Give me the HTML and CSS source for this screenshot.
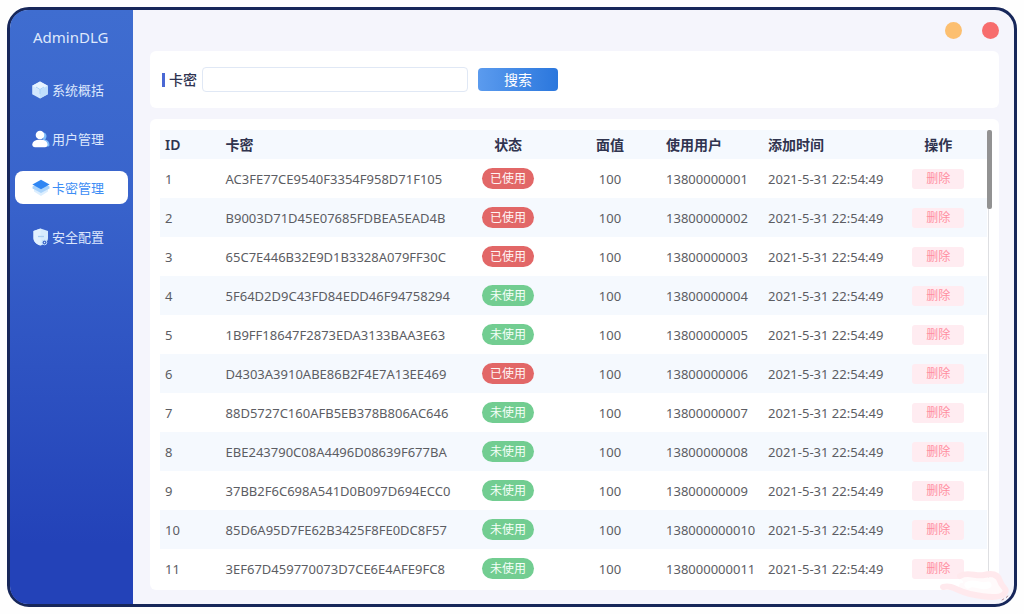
FILE: index.html
```html
<!DOCTYPE html>
<html lang="zh-CN">
<head>
<meta charset="utf-8">
<title>AdminDLG</title>
<link rel="stylesheet" href="styles.css">
</head>
<body>
<div class="window">
  <aside class="sidebar">
    <h1 class="brand">AdminDLG</h1>
    <nav class="nav">
      <a class="nav-link" href="#">
        <svg class="icon" viewBox="0 0 18 18"><path d="M8 .5 15.800 4.700v8.600L8 17.500 .2 13.300V4.700Z" fill="#d3e8fe"/><path d="M8 .5 15.800 4.700 8 9 .2 4.700Z" fill="#e6f3ff"/><path d="M8 9 15.800 4.700v8.600L8 17.500Z" fill="#bfdffc"/><path d="M4 6 8 8.500l4-2.500M8 8.500v4.500" stroke="#a6d0fa" fill="none"/></svg>
        系统概括</a>
      <a class="nav-link" href="#">
        <svg class="icon" viewBox="0 0 18 18"><path d="M11 2.500c4 0 4.500 5 2 7 3 .8 4.500 3 4.500 5.500 0 1-1 1.500-2 1.500h-5Z" fill="#7fbcfa"/><circle cx="8" cy="5" r="4.300" fill="#fff"/><path d="M.3 14.500C.5 11.500 3 9.700 8 9.700s7.300 1.800 7.500 4.800c0 1.800-1 2.700-2.500 2.700H3C1.400 17.200.3 16.300.3 14.500Z" fill="#fff"/></svg>
        用户管理</a>
      <a class="nav-link active" href="#" aria-current="page">
        <svg class="icon" viewBox="0 0 18 18"><path d="M2 10.500 9 7l7 3.500v2L9 17l-7-4.500Z" fill="#dceefe"/><path d="M.5 7.500 9 4l8.500 3.500v2L9 14 .5 9.500Z" fill="#a9d3fb"/><path d="M9 .8 17.600 5.500 9 10.300.4 5.500Z" fill="#2f86f3"/></svg>
        卡密管理</a>
      <a class="nav-link" href="#">
        <svg class="icon" viewBox="0 0 18 18"><path d="M8.500.5 16 3v7c0 3.500-3 6-7.500 7.500C4 16 1.500 13.500 1.500 10V3Z" fill="#d5eafd"/><path d="M8.500.5V17.500C4 16 1.500 13.500 1.500 10V3Z" fill="#e2f1ff"/><path d="M6 8.500h6" stroke="#a9cdf2" stroke-width="1.300"/><circle cx="12.500" cy="14.500" r="2.300" fill="#3f67c9" stroke="#b9d8f8"/><circle cx="12.500" cy="14.500" r=".7" fill="#d5eafd"/></svg>
        安全配置</a>
    </nav>
  </aside>
  <main class="main">
    <header class="titlebar">
      <button class="dot minimize" type="button" aria-label="最小化"></button>
      <button class="dot close" type="button" aria-label="关闭"></button>
    </header>
    <form class="card search">
      <label class="search-label" for="key">卡密</label>
      <input class="search-input" id="key" type="text">
      <button class="search-button" type="button">搜索</button>
    </form>
    <section class="card list">
      <table class="table">
        <colgroup><col class="c-id"><col class="c-key"><col class="c-status"><col class="c-value"><col class="c-user"><col class="c-time"><col class="c-action"></colgroup>
        <thead><tr><th>ID</th><th>卡密</th><th class="mid">状态</th><th class="mid">面值</th><th>使用用户</th><th>添加时间</th><th class="mid">操作</th></tr></thead>
        <tbody>
          <tr><td>1</td><td>AC3FE77CE9540F3354F958D71F105</td><td class="mid"><span class="badge used">已使用</span></td><td class="mid">100</td><td>13800000001</td><td>2021-5-31 22:54:49</td><td class="mid"><button class="delete" type="button">删除</button></td></tr>
          <tr><td>2</td><td>B9003D71D45E07685FDBEA5EAD4B</td><td class="mid"><span class="badge used">已使用</span></td><td class="mid">100</td><td>13800000002</td><td>2021-5-31 22:54:49</td><td class="mid"><button class="delete" type="button">删除</button></td></tr>
          <tr><td>3</td><td>65C7E446B32E9D1B3328A079FF30C</td><td class="mid"><span class="badge used">已使用</span></td><td class="mid">100</td><td>13800000003</td><td>2021-5-31 22:54:49</td><td class="mid"><button class="delete" type="button">删除</button></td></tr>
          <tr><td>4</td><td>5F64D2D9C43FD84EDD46F94758294</td><td class="mid"><span class="badge">未使用</span></td><td class="mid">100</td><td>13800000004</td><td>2021-5-31 22:54:49</td><td class="mid"><button class="delete" type="button">删除</button></td></tr>
          <tr><td>5</td><td>1B9FF18647F2873EDA3133BAA3E63</td><td class="mid"><span class="badge">未使用</span></td><td class="mid">100</td><td>13800000005</td><td>2021-5-31 22:54:49</td><td class="mid"><button class="delete" type="button">删除</button></td></tr>
          <tr><td>6</td><td>D4303A3910ABE86B2F4E7A13EE469</td><td class="mid"><span class="badge used">已使用</span></td><td class="mid">100</td><td>13800000006</td><td>2021-5-31 22:54:49</td><td class="mid"><button class="delete" type="button">删除</button></td></tr>
          <tr><td>7</td><td>88D5727C160AFB5EB378B806AC646</td><td class="mid"><span class="badge">未使用</span></td><td class="mid">100</td><td>13800000007</td><td>2021-5-31 22:54:49</td><td class="mid"><button class="delete" type="button">删除</button></td></tr>
          <tr><td>8</td><td>EBE243790C08A4496D08639F677BA</td><td class="mid"><span class="badge">未使用</span></td><td class="mid">100</td><td>13800000008</td><td>2021-5-31 22:54:49</td><td class="mid"><button class="delete" type="button">删除</button></td></tr>
          <tr><td>9</td><td>37BB2F6C698A541D0B097D694ECC0</td><td class="mid"><span class="badge">未使用</span></td><td class="mid">100</td><td>13800000009</td><td>2021-5-31 22:54:49</td><td class="mid"><button class="delete" type="button">删除</button></td></tr>
          <tr><td>10</td><td>85D6A95D7FE62B3425F8FE0DC8F57</td><td class="mid"><span class="badge">未使用</span></td><td class="mid">100</td><td>138000000010</td><td>2021-5-31 22:54:49</td><td class="mid"><button class="delete" type="button">删除</button></td></tr>
          <tr><td>11</td><td>3EF67D459770073D7CE6E4AFE9FC8</td><td class="mid"><span class="badge">未使用</span></td><td class="mid">100</td><td>138000000011</td><td>2021-5-31 22:54:49</td><td class="mid"><button class="delete" type="button">删除</button></td></tr>
        </tbody>
      </table>
      <div class="track"><div class="thumb"></div></div>
    </section>
  </main>
  <svg class="smudge" viewBox="0 0 76 36" fill="none" stroke-linecap="round" stroke-linejoin="round">
    <path d="M26 9 48 11 62 13 64 22 36 24 24 17" fill="#fffafb" stroke="#fffafb" stroke-width="6"/>
    <path d="M22 7C30 2 38 8 46 6S60 5 62 12 71 20 66 25 46 28 32 25 16 16 5 18" stroke="#ffe9ed" stroke-width="6"/>
    <path d="M30 16C36 12 42 19 50 16" stroke="#fff" stroke-width="7"/>
    <path d="M64 31 69 28 71 25" stroke="#b98f96" stroke-width="1" stroke-dasharray="2 3"/>
  </svg>
</div>
</body>
</html>
```
FILE: styles.css
```css
* { box-sizing: border-box; }

body {
  margin: 0;
  padding: 7px 7px 8px;
  background: #fefefe;
  color: #5c5d63;
  font: 12px/18px "Noto Sans", "Noto Sans CJK SC", sans-serif;
}

button, input { font: inherit; }

button { border: 0; padding: 0; cursor: pointer; }

.window {
  position: relative;
  display: flex;
  min-height: calc(100vh - 15px);
  border: 3px solid #17275a;
  border-radius: 22px;
  background: #f5f5fc;
}

.sidebar {
  flex: none;
  width: 123px;
  padding: 17px 5px;
  border-radius: 18px 0 0 18px;
  background: linear-gradient(#3f6dd0, #3964cc 30%, #2342b8 90%);
}

.brand {
  margin: 0 0 26px;
  padding-left: 18px;
  color: #dfe8fb;
  font-size: 15px;
  font-weight: 400;
  line-height: 20px;
}

.nav { display: grid; gap: 16px; }

.nav-link {
  display: flex;
  align-items: center;
  gap: 2px;
  height: 33px;
  padding-left: 17px;
  border-radius: 8px;
  color: #dce7fc;
  font-size: 13px;
  text-decoration: none;
}

.nav-link.active { background: #fff; color: #3c8df5; }

.icon { width: 18px; height: 18px; }

.main {
  flex: 1;
  min-width: 0;
  padding: 0 15px 14px 17px;
}

.titlebar {
  display: flex;
  justify-content: flex-end;
  align-items: center;
  gap: 20px;
  height: 41px;
}

.dot { width: 17px; height: 17px; border-radius: 50%; }
.minimize { background: #fcbf70; }
.close { background: #f76d6d; }

.card { border-radius: 6px; background: #fff; }

.search {
  display: flex;
  align-items: center;
  height: 57px;
  margin-bottom: 11px;
  padding: 0 12px;
}

.search-label {
  width: 40px;
  color: #2f3350;
  font-size: 14px;
  font-weight: 500;
}

.search-label::before {
  content: "";
  display: inline-block;
  width: 3px;
  height: 14px;
  margin-right: 4px;
  background: #4a68d4;
  vertical-align: -2px;
}

.search-input {
  width: 266px;
  height: 25px;
  margin-right: 10px;
  padding: 0 8px;
  border: 1px solid #e0e8f5;
  border-radius: 4px;
  background: #fff;
}

.search-button {
  width: 80px;
  height: 23px;
  border-radius: 4px;
  background: linear-gradient(90deg, #5b9bee, #2b77dd);
  color: #fff;
  font-size: 14px;
}

.list { display: flex; padding: 11px 7px 2px 10px; }

.table {
  flex: 1;
  border-collapse: collapse;
  table-layout: fixed;
}

.c-id { width: 60px; }
.c-key { width: 236px; }
.c-status { width: 104px; }
.c-value { width: 101px; }
.c-user { width: 102px; }
.c-time { width: 126px; }
.c-action { width: 98px; }

th, td { padding: 0 6px; text-align: left; white-space: nowrap; }

th {
  height: 29px;
  background: #f5f9fe;
  color: #30344f;
  font-size: 14px;
  font-weight: 600;
}

td { height: 39px; font-size: 13px; }

th:first-child, td:first-child { padding-left: 5px; }

tbody tr:nth-child(even) { background: #f5f9fe; }

th.mid, td.mid { text-align: center; }

.badge {
  display: inline-block;
  width: 52px;
  border-radius: 11px;
  background: #72cd91;
  color: #f4fff8;
  font-size: 12px;
  line-height: 21px;
  vertical-align: middle;
}

.badge.used { background: #e26767; color: #fff5f5; }

.delete {
  width: 52px;
  height: 20px;
  border-radius: 3px;
  background: #ffecf1;
  color: #ff8ea0;
  font-size: 12px;
  vertical-align: middle;
}

.track {
  flex: none;
  width: 5px;
  background: linear-gradient(90deg, #fff 1px, #dedfe2 1px, #dedfe2 2px, #fff 2px);
}

.thumb { height: 79px; border-radius: 2px; background: #929292; }

.smudge {
  position: absolute;
  right: 0;
  bottom: -1px;
  width: 76px;
  height: 36px;
}
```
